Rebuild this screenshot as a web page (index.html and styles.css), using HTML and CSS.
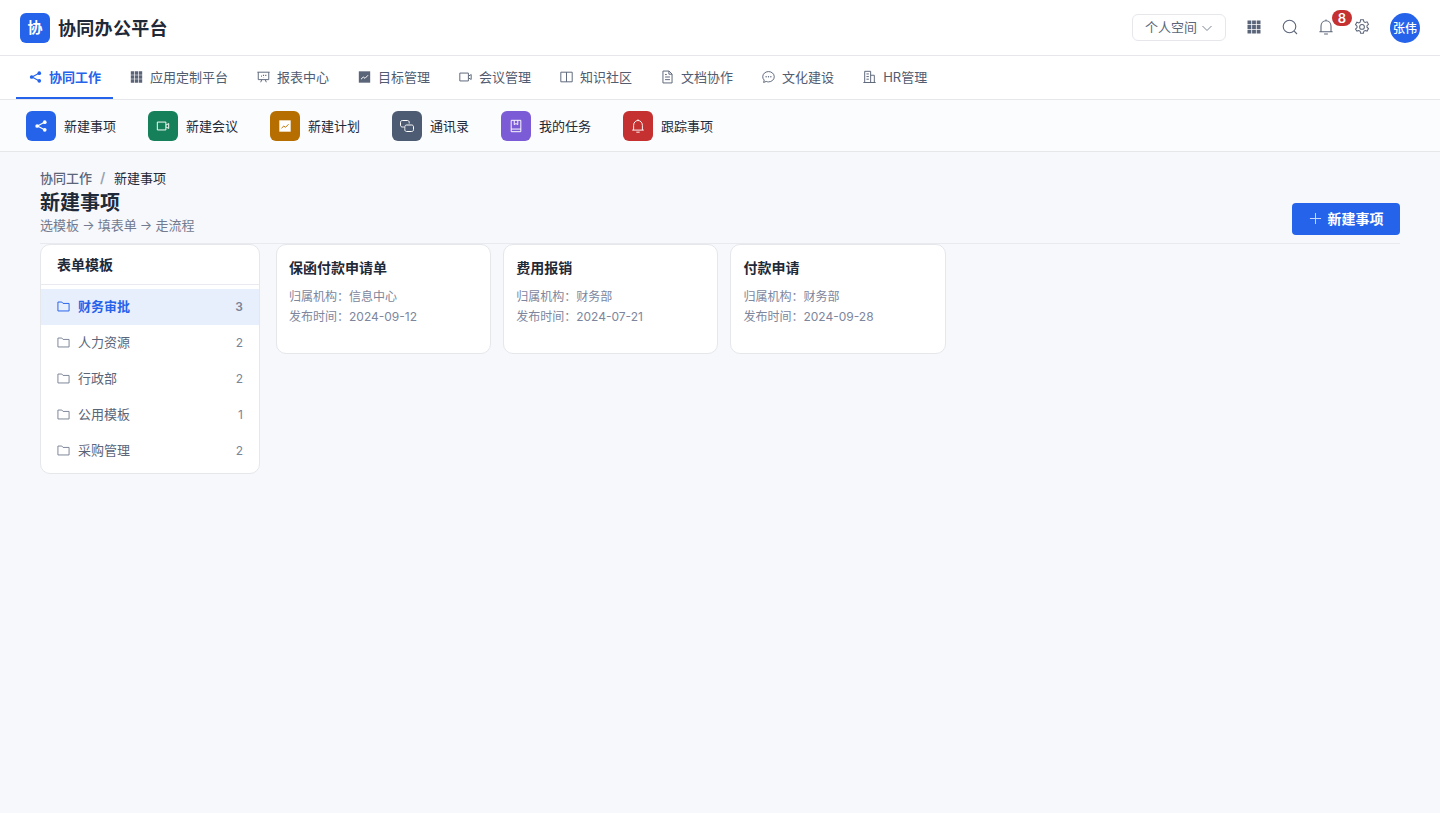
FILE: index.html
```html
<!DOCTYPE html>
<html lang="zh-CN">

<head>
    <meta charset="utf-8">
    <title>协同办公平台</title>
    <link rel="stylesheet" href="styles.css">
</head>

<body>
    <svg class="sprite" width="0" height="0" aria-hidden="true">
        <symbol id="i-share" viewBox="0 0 16 16">
            <path d="M4 8l8-4.2M4 8l8 4.2" fill="none" stroke="currentColor" stroke-width="1.3" />
            <circle cx="3.6" cy="8" r="2.1" fill="currentColor" />
            <circle cx="12.3" cy="3.6" r="2.1" fill="currentColor" />
            <circle cx="12.3" cy="12.4" r="2.1" fill="currentColor" />
        </symbol>
        <symbol id="i-grid" viewBox="0 0 16 16">
            <path fill="currentColor"
                d="M1.5 1.5h3.8v3.8H1.5zM6.1 1.5h3.8v3.8H6.1zM10.7 1.5h3.8v3.8h-3.8zM1.5 6.1h3.8v3.8H1.5zM6.1 6.1h3.8v3.8H6.1zM10.7 6.1h3.8v3.8h-3.8zM1.5 10.7h3.8v3.8H1.5zM6.1 10.7h3.8v3.8H6.1zM10.7 10.7h3.8v3.8h-3.8z" />
        </symbol>
        <symbol id="i-report" viewBox="0 0 16 16">
            <path fill="none" stroke="currentColor" stroke-width="1.1"
                d="M1 2.5h14M2 2.5v8.500h12V2.500M6 11l-1.200 3M10 11l1.200 3" />
            <path fill="none" stroke="currentColor" stroke-width="1.3" stroke-dasharray="1.4 1.4"
                d="M5.200 7h1M8 5.500v3M10.600 5.500v2" />
        </symbol>
        <symbol id="i-chart" viewBox="0 0 16 16">
            <path fill="currentColor" d="M1.500 1.500h13v13h-13z" />
            <path fill="none" stroke="var(--chart-line, #fff)" stroke-width="1.1" d="M4 10.500l2.600-2.400 2 1.400L12 6" />
        </symbol>
        <symbol id="i-video" viewBox="0 0 16 16">
            <path fill="none" stroke="currentColor" stroke-width="1.1"
                d="M1.500 3.500h9.800v9h-9.800zM11.300 7l3.200-1.800v5.600L11.300 9" />
        </symbol>
        <symbol id="i-book" viewBox="0 0 16 16">
            <path fill="none" stroke="currentColor" stroke-width="1.1" d="M1.500 2.500h13v11h-13zM8 2.500v11" />
        </symbol>
        <symbol id="i-doc" viewBox="0 0 16 16">
            <path fill="none" stroke="currentColor" stroke-width="1.1"
                d="M2.800 1.200h7l3.400 3.400v10.200H2.800zM9.600 1.200v3.600h3.600M5.200 8h5.600M5.200 11h5.600M5.200 5.200h2" />
        </symbol>
        <symbol id="i-chat" viewBox="0 0 16 16">
            <path fill="none" stroke="currentColor" stroke-width="1.1"
                d="M8 1.800c3.600 0 6.600 2.600 6.600 5.900S11.600 13.600 8 13.600c-.9 0-1.800-.2-2.600-.5l-3 1.100.7-2.700C2 10.500 1.400 9.200 1.400 7.700 1.400 4.400 4.400 1.800 8 1.800z" />
            <circle cx="5.300" cy="7.700" r=".8" fill="currentColor" />
            <circle cx="8" cy="7.700" r=".8" fill="currentColor" />
            <circle cx="10.700" cy="7.700" r=".8" fill="currentColor" />
        </symbol>
        <symbol id="i-building" viewBox="0 0 16 16">
            <path fill="none" stroke="currentColor" stroke-width="1.1"
                d="M1 14.300h14M2.500 14.300V1.500h6.800v12.800M9.300 6h4.200v8.300M4.500 4.500h2.800M4.500 7.500h2.800M4.500 10.500h2.800" />
        </symbol>
        <symbol id="i-links" viewBox="1 2 14 12">
            <path fill="none" stroke="currentColor" stroke-width="1"
                d="M10.200 5.500V4.300c0-1.100-.8-1.800-1.800-1.800H3.300c-1 0-1.800.7-1.800 1.800v2.900c0 1.100.8 1.800 1.800 1.800h1.500M5.800 10.500v1.200c0 1.100.8 1.800 1.800 1.800h5.100c1 0 1.800-.7 1.800-1.800V8.800c0-1.100-.8-1.800-1.800-1.800H7.600c-1 0-1.800.7-1.800 1.800z" />
        </symbol>
        <symbol id="i-task" viewBox="0 0 16 16">
            <path fill="none" stroke="currentColor" stroke-width="1.1"
                d="M2.500 1.500h11v13h-11zM2.500 11.500h11M6 1.500v5l2-1.300 2 1.300v-5" />
        </symbol>
        <symbol id="i-bell" viewBox="1.200 .4 13.600 15">
            <path fill="none" stroke="currentColor" stroke-width="1"
                d="M1.800 12.300h12.400M3.300 12.300V7.200C3.300 4.300 5.300 2 8 2s4.700 2.300 4.700 5.200v5.100M6.200 14.500h3.600M8 .8V2" />
        </symbol>
        <symbol id="i-search" viewBox="0 0 16 16">
            <circle cx="7.500" cy="7.500" r="6.300" fill="none" stroke="currentColor" stroke-width="1.100" />
            <path d="M12.200 12.200l2.800 2.800" fill="none" stroke="currentColor" stroke-width="1.100" />
        </symbol>
        <symbol id="i-gear" viewBox="1.400 .6 13.200 14.800">
            <path fill="none" stroke="currentColor" stroke-width=".95"
                d="M6.700 1.200h2.600l.4 1.900 1.200.7 1.800-.6 1.300 2.300-1.400 1.300v1.400l1.400 1.300-1.300 2.300-1.800-.6-1.200.7-.4 1.900H6.700l-.4-1.900-1.200-.7-1.800.6L2 9.900l1.400-1.300V7.200L2 5.900l1.300-2.300 1.800.6 1.200-.7z" />
            <circle cx="8" cy="7.900" r="2.200" fill="none" stroke="currentColor" stroke-width=".95" />
        </symbol>
        <symbol id="i-folder" viewBox="0 0 14 14">
            <path fill="none" stroke="currentColor" stroke-width="1.050"
                d="M1 2.200h4.200l1.300 1.500H13v8.100H1z" />
        </symbol>
        <symbol id="i-plus" viewBox="0 0 14 14">
            <path fill="none" stroke="currentColor" stroke-width="1.100" d="M7 1v12M1 7h12" />
        </symbol>
    </svg>

    <header class="topbar">
        <div class="brand">
            <div class="brand-logo">协</div>
            <div class="brand-name">协同办公平台</div>
        </div>
        <div class="topbar-tools">
            <div class="space-select">
                <span>个人空间</span>
                <svg class="chevron" viewBox="0 0 12 12"><path d="M1.500 4l4.500 4.500L10.500 4" /></svg>
            </div>
            <svg class="tool tool-grid"><use href="#i-grid" /></svg>
            <svg class="tool tool-search"><use href="#i-search" /></svg>
            <div class="bell-wrap">
                <svg class="tool"><use href="#i-bell" /></svg>
                <span class="badge">8</span>
            </div>
            <svg class="tool tool-gear"><use href="#i-gear" /></svg>
            <div class="avatar">张伟</div>
        </div>
    </header>

    <nav class="tabs">
        <a class="tab active"><svg class="tab-icon"><use href="#i-share" /></svg>协同工作</a>
        <a class="tab"><svg class="tab-icon"><use href="#i-grid" /></svg>应用定制平台</a>
        <a class="tab"><svg class="tab-icon"><use href="#i-report" /></svg>报表中心</a>
        <a class="tab"><svg class="tab-icon"><use href="#i-chart" /></svg>目标管理</a>
        <a class="tab"><svg class="tab-icon"><use href="#i-video" /></svg>会议管理</a>
        <a class="tab"><svg class="tab-icon"><use href="#i-book" /></svg>知识社区</a>
        <a class="tab"><svg class="tab-icon"><use href="#i-doc" /></svg>文档协作</a>
        <a class="tab"><svg class="tab-icon"><use href="#i-chat" /></svg>文化建设</a>
        <a class="tab"><svg class="tab-icon"><use href="#i-building" /></svg>HR管理</a>
    </nav>

    <div class="shortcuts">
        <a class="shortcut"><span class="shortcut-icon blue"><svg><use href="#i-share" /></svg></span>新建事项</a>
        <a class="shortcut"><span class="shortcut-icon green"><svg><use href="#i-video" /></svg></span>新建会议</a>
        <a class="shortcut"><span class="shortcut-icon amber"><svg><use href="#i-chart" /></svg></span>新建计划</a>
        <a class="shortcut"><span class="shortcut-icon slate"><svg><use href="#i-links" /></svg></span>通讯录</a>
        <a class="shortcut"><span class="shortcut-icon purple"><svg><use href="#i-task" /></svg></span>我的任务</a>
        <a class="shortcut"><span class="shortcut-icon red"><svg><use href="#i-bell" /></svg></span>跟踪事项</a>
    </div>

    <main class="content">
        <div class="page-head">
            <div class="page-text">
                <div class="crumbs">
                    <span class="crumb-link">协同工作</span>
                    <span class="crumb-sep">/</span>
                    <span class="crumb-current">新建事项</span>
                </div>
                <h1 class="page-title">新建事项</h1>
                <div class="page-sub">选模板 → 填表单 → 走流程</div>
            </div>
            <button class="primary-btn"><svg><use href="#i-plus" /></svg>新建事项</button>
        </div>

        <div class="workspace">
            <aside class="side-panel">
                <div class="side-title">表单模板</div>
                <ul class="side-list">
                    <li class="side-row active"><svg><use href="#i-folder" /></svg><span class="side-name">财务审批</span><span class="side-count">3</span></li>
                    <li class="side-row"><svg><use href="#i-folder" /></svg><span class="side-name">人力资源</span><span class="side-count">2</span></li>
                    <li class="side-row"><svg><use href="#i-folder" /></svg><span class="side-name">行政部</span><span class="side-count">2</span></li>
                    <li class="side-row"><svg><use href="#i-folder" /></svg><span class="side-name">公用模板</span><span class="side-count">1</span></li>
                    <li class="side-row"><svg><use href="#i-folder" /></svg><span class="side-name">采购管理</span><span class="side-count">2</span></li>
                </ul>
            </aside>

            <section class="card-grid">
                <div class="form-card">
                    <div class="form-title">保函付款申请单</div>
                    <div class="form-meta">归属机构：信息中心</div>
                    <div class="form-meta">发布时间：2024-09-12</div>
                </div>
                <div class="form-card">
                    <div class="form-title">费用报销</div>
                    <div class="form-meta">归属机构：财务部</div>
                    <div class="form-meta">发布时间：2024-07-21</div>
                </div>
                <div class="form-card">
                    <div class="form-title">付款申请</div>
                    <div class="form-meta">归属机构：财务部</div>
                    <div class="form-meta">发布时间：2024-09-28</div>
                </div>
            </section>
        </div>
    </main>
</body>

</html>
```

FILE: styles.css
```css
* {
    box-sizing: border-box;
}

html,
body {
    height: 100%;
}

body {
    margin: 0;
    font-family: Inter, "Noto Sans CJK SC", sans-serif;
    background: #f6f8fc;
    color: #1f2937;
    display: flex;
    flex-direction: column;
}

.sprite {
    position: absolute;
}

.topbar {
    height: 56px;
    flex: none;
    background: #fff;
    border-bottom: 1px solid #e5e7eb;
    padding: 0 20px;
    display: flex;
    align-items: center;
    justify-content: space-between;
}

.brand {
    display: flex;
    align-items: center;
    gap: 8px;
}

.brand-logo {
    width: 30px;
    height: 30px;
    border-radius: 6px;
    background: #2563eb;
    color: #fff;
    font-size: 15px;
    font-weight: 700;
    padding-bottom: 2px;
    display: flex;
    align-items: center;
    justify-content: center;
}

.brand-name {
    font-size: 18px;
    font-weight: 600;
    letter-spacing: .3px;
    padding-bottom: 2px;
    color: #1f2937;
}

.topbar-tools {
    display: flex;
    align-items: center;
}

.space-select {
    width: 94px;
    height: 27px;
    border: 1px solid #e5e7eb;
    border-radius: 6px;
    padding: 0 0 2px 12px;
    font-size: 13px;
    color: #5b6579;
    display: flex;
    align-items: center;
    gap: 4px;
    margin-right: 20px;
}

.chevron {
    width: 12px;
    height: 12px;
    margin-top: 2px;
    fill: none;
    stroke: #7b8496;
    stroke-width: 1;
}

.tool {
    display: block;
    width: 16px;
    height: 16px;
    color: #5b6579;
}

.tool-grid {
    margin: -1px 20px 0 0;
}

.tool-search {
    margin: -1px 20px 0 0;
}

.bell-wrap {
    position: relative;
    width: 16px;
    height: 16px;
    margin: -1px 20px 0 0;
}

.badge {
    position: absolute;
    top: -9px;
    left: 14px;
    width: 20px;
    height: 16px;
    border-radius: 8px;
    background: #c53030;
    color: #fff;
    font-size: 13px;
    font-weight: 600;
    line-height: 16px;
    text-align: center;
}

.tool-gear {
    margin: -1px 20px 0 0;
}

.avatar {
    width: 30px;
    height: 30px;
    border-radius: 50%;
    background: #2563eb;
    color: #fff;
    font-size: 12px;
    font-weight: 500;
    display: flex;
    align-items: center;
    justify-content: center;
}

.tabs {
    height: 44px;
    flex: none;
    background: #fff;
    border-bottom: 1px solid #e5e7eb;
    padding: 0 16px;
    display: flex;
    gap: 4px;
}

.tab {
    height: 43px;
    padding: 0 12px;
    font-size: 13px;
    color: #515c70;
    display: flex;
    align-items: center;
    gap: 6px;
    border-bottom: 2px solid transparent;
}

.tab.active {
    color: #2563eb;
    font-weight: 600;
    border-bottom-color: #2563eb;
}

.tab-icon {
    width: 15px;
    height: 14px;
    color: #5b6579;
}

.tab.active .tab-icon {
    color: #2563eb;
}

.shortcuts {
    height: 52px;
    flex: none;
    background: #fbfcfe;
    border-bottom: 1px solid #e5e7eb;
    padding: 0 26px;
    display: flex;
    align-items: center;
    gap: 32px;
}

.shortcut {
    font-size: 13px;
    color: #1f2937;
    display: flex;
    align-items: center;
    gap: 8px;
}

.shortcut-icon {
    width: 30px;
    height: 30px;
    border-radius: 6px;
    color: #fff;
    display: flex;
    align-items: center;
    justify-content: center;
}

.shortcut-icon svg {
    width: 14px;
    height: 14px;
}

.shortcut-icon.blue {
    background: #2563eb;
}

.shortcut-icon.green {
    background: #15805a;
}

.shortcut-icon.amber {
    background: #b76e00;
    --chart-line: #b76e00;
}

.shortcut-icon.slate {
    background: #4d5b73;
}

.shortcut-icon.purple {
    background: #7c5bd6;
}

.shortcut-icon.red {
    background: #c53030;
}

.content {
    flex: 1;
    padding: 17px 40px 0;
}

.page-head {
    display: flex;
    align-items: flex-end;
    justify-content: space-between;
    padding-bottom: 8px;
    border-bottom: 1px solid #e8eaf0;
}

.page-text {
    padding-bottom: 1px;
}

.crumbs {
    font-size: 13px;
    line-height: 18px;
    display: flex;
    align-items: center;
    gap: 8px;
}

.crumb-link {
    color: #5b6579;
    font-weight: 500;
}

.crumb-sep {
    width: 6px;
    font-size: 14px;
    font-weight: 600;
    color: #9aa3b2;
}

.crumb-current {
    color: #1f2937;
}

.page-title {
    margin: 3px 0 0;
    font-size: 20px;
    line-height: 26px;
    font-weight: 600;
    color: #1f2937;
}

.page-sub {
    font-size: 13px;
    line-height: 18px;
    word-spacing: -.5px;
    color: #727b8f;
}

.primary-btn {
    width: 108px;
    height: 32px;
    border: none;
    border-radius: 4px;
    background: #2563eb;
    color: #fff;
    font-family: inherit;
    font-size: 14px;
    font-weight: 600;
    display: flex;
    align-items: center;
    justify-content: center;
    gap: 6px;
    padding: 0 0 2px;
}

.primary-btn svg {
    width: 13px;
    height: 13px;
    color: #c5d6fa;
}

.workspace {
    display: flex;
    gap: 16px;
    align-items: flex-start;
}

.side-panel {
    width: 220px;
    flex: none;
    background: #fff;
    border: 1px solid #e5e7eb;
    border-radius: 10px;
    overflow: hidden;
}

.side-title {
    height: 40px;
    padding: 0 16px 2px;
    font-size: 14px;
    font-weight: 600;
    color: #1f2937;
    display: flex;
    align-items: center;
    border-bottom: 1px solid #e8eaf0;
}

.side-list {
    list-style: none;
    margin: 0;
    padding: 4px 0;
}

.side-row {
    height: 36px;
    padding: 0 16px 2px;
    font-size: 13px;
    color: #5b6579;
    display: flex;
    align-items: center;
    gap: 8px;
}

.side-row svg {
    width: 13px;
    height: 13px;
    color: #7b8496;
}

.side-name {
    flex: 1;
    padding-bottom: 2px;
}

.side-count {
    font-size: 12px;
    color: #7b8496;
}

.side-row.active {
    background: #e8effc;
    color: #2563eb;
    font-weight: 600;
}

.side-row.active svg {
    color: #2563eb;
}

.card-grid {
    flex: 1;
    display: grid;
    grid-template-columns: repeat(5, 1fr);
    gap: 12px;
}

.form-card {
    height: 110px;
    background: #fff;
    border: 1px solid #e5e7eb;
    border-radius: 10px;
    padding: 13px 12px;
}

.form-title {
    font-size: 14px;
    line-height: 20px;
    font-weight: 600;
    color: #1f2937;
    margin-bottom: 9px;
}

.form-meta {
    font-size: 12px;
    line-height: 20px;
    color: #7d869c;
}
```
